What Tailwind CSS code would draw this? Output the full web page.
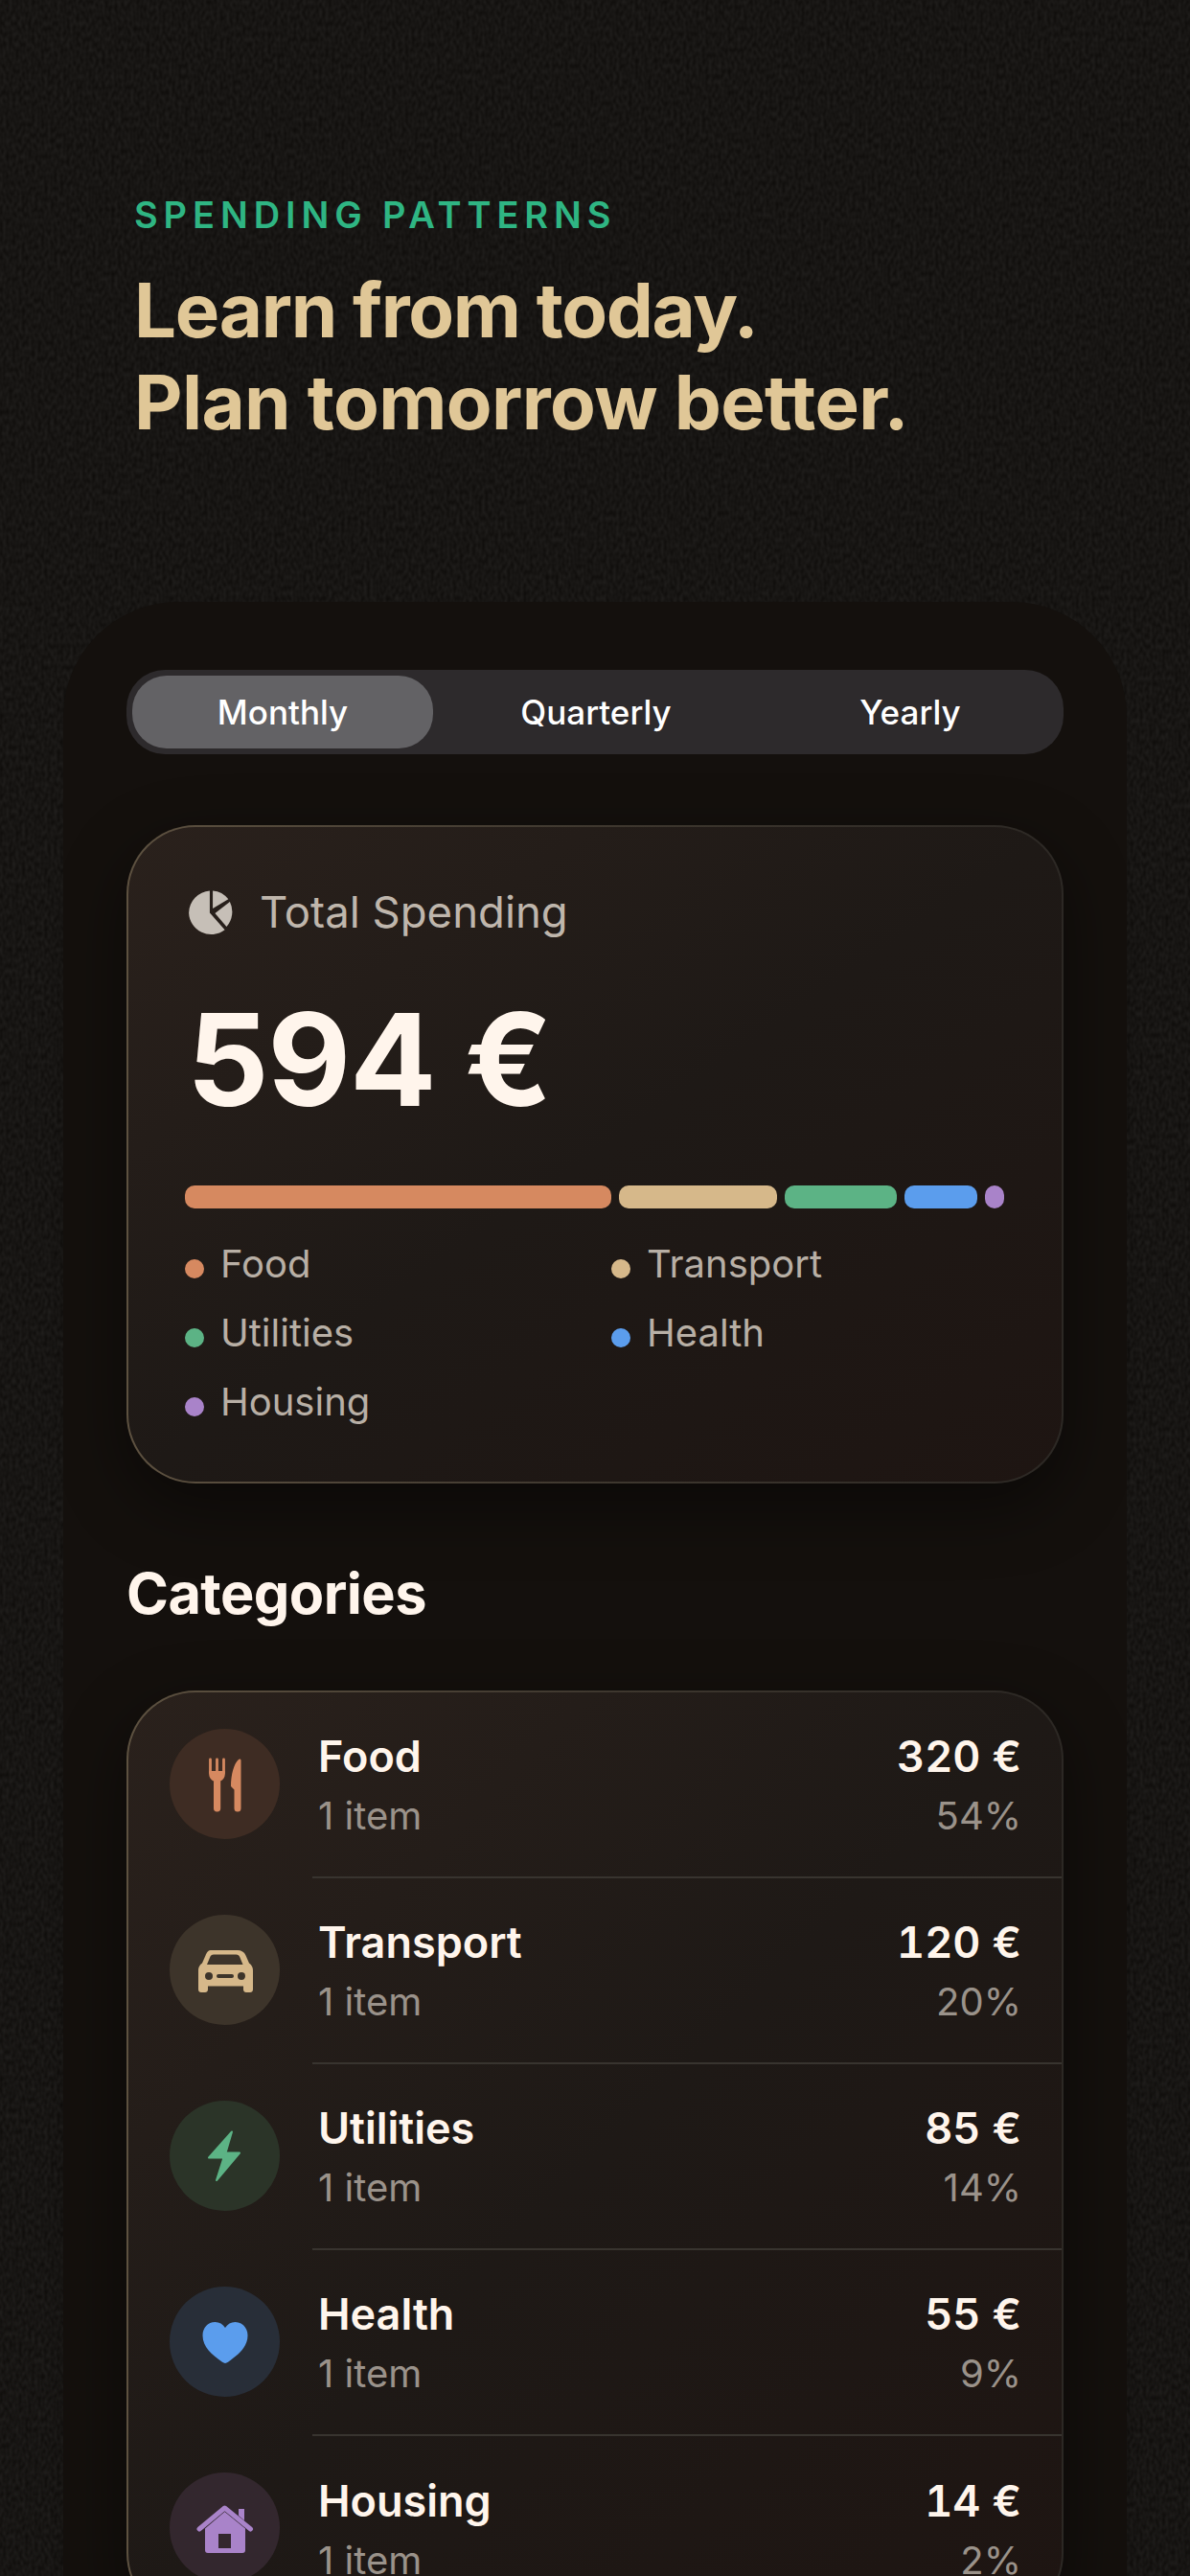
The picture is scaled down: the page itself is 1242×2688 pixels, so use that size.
<!DOCTYPE html>
<html lang="en">
<head>
  <meta charset="UTF-8">
  <meta name="viewport" content="width=device-width, initial-scale=1.0">
  <title>Spending Patterns</title>
  <script src="https://cdn.jsdelivr.net/npm/@tailwindcss/browser@4"></script>
</head>
<body class="bg-[#100e0c] font-[Inter,sans-serif]">
<div class="relative w-[1242px] h-[2688px] overflow-hidden bg-[#100e0c]">

  <!-- grain -->
  <svg class="absolute inset-0 w-full h-full" aria-hidden="true">
    <filter id="grain"><feTurbulence type="fractalNoise" baseFrequency="0.3 0.18" numOctaves="1" seed="4"/><feColorMatrix values="0 0 0 0 1  0 0 0 0 1  0 0 0 0 1  0.1 0 0 0 -0.02"/></filter>
    <rect width="100%" height="100%" filter="url(#grain)"/>
  </svg>

  <div class="relative">
    <header class="pt-[201px] pl-[140px] h-[628px]">
      <p class="text-[38px] leading-[46px] font-semibold tracking-[0.155em] text-[#2fb583]">SPENDING PATTERNS</p>
      <h1 class="mt-[29px] text-[78px] leading-[96px] font-bold tracking-[-0.008em] text-[#e0c797]"><span class="tracking-[-0.017em]">Learn from today.</span><br>Plan tomorrow better.</h1>
    </header>

    <main class="mx-[66px] px-[66px] pt-[71px] bg-[#14100d] rounded-t-[120px] h-[2060px]">

      <div class="flex w-[978px] h-[88px] p-[6px] rounded-[40px] bg-[#2d2a2c] text-[35px] font-medium text-white">
        <div class="w-[314px] rounded-[36px] bg-[#636265] flex items-center justify-center">Monthly</div>
        <div class="w-[336px] pl-[4px] flex items-center justify-center">Quarterly</div>
        <div class="w-[316px] pl-[8px] flex items-center justify-center">Yearly</div>
      </div>

      <!-- total -->
      <section class="mt-[74px] w-[978px] h-[687px] p-[2px] rounded-[72px] bg-linear-to-r from-[#5d5140] via-[#3f382f] to-[#2c2824] shadow-[0_24px_70px_rgba(0,0,0,0.45)]">
        <div class="h-full rounded-[70px] bg-linear-to-br from-[#2a211c] via-[#1e1916] to-[#1e1512] pl-[59px] pr-[59px] pt-[65px]">
          <div class="flex items-center h-[48px] pl-[4px] gap-[27px]">
            <svg class="w-[47px] h-[47px]" viewBox="0 0 48 48" fill="#c6bfb7">
              <path d="M22.4 .6V24l16 18.2A23.9 23.9 0 0 1 .1 24 23.9 23.9 0 0 1 22.4 .6z"/>
              <path d="M25.6 .6a23.9 23.9 0 0 1 16.6 8.9L25.6 19.4z"/>
              <path d="M43.8 12.2a23.9 23.9 0 0 1-3.5 26.5L28 24.4z"/>
            </svg>
            <span class="text-[45.5px] leading-[48px] text-[#bfb6ac]">Total Spending</span>
          </div>
          <div class="mt-[49px] pl-[2px] text-[134px] leading-[160px] font-bold tracking-[-0.01em] text-[#fff5ec]">594 €</div>
          <div class="mt-[52px] flex gap-[8px] h-[24px]">
            <div class="w-[445px] rounded-[10px] bg-[#d68960]"></div>
            <div class="w-[165px] rounded-[10px] bg-[#d6b88a]"></div>
            <div class="w-[117px] rounded-[10px] bg-[#5cb385]"></div>
            <div class="w-[76px] rounded-[10px] bg-[#5b9ded]"></div>
            <div class="w-[20px] rounded-[10px] bg-[#a983c9]"></div>
          </div>
          <div class="mt-[22px] grid grid-cols-[445px_1fr] text-[40px] leading-[72px] text-[#b8afa5]">
            <div class="flex items-center gap-[17px]"><span class="mt-[10px] w-[20px] h-[20px] rounded-full bg-[#d68960]"></span>Food</div>
            <div class="flex items-center gap-[17px]"><span class="mt-[10px] w-[20px] h-[20px] rounded-full bg-[#d6b88a]"></span>Transport</div>
            <div class="flex items-center gap-[17px]"><span class="mt-[10px] w-[20px] h-[20px] rounded-full bg-[#5cb385]"></span>Utilities</div>
            <div class="flex items-center gap-[17px]"><span class="mt-[10px] w-[20px] h-[20px] rounded-full bg-[#5b9ded]"></span>Health</div>
            <div class="flex items-center gap-[17px]"><span class="mt-[10px] w-[20px] h-[20px] rounded-full bg-[#a983c9]"></span>Housing</div>
          </div>
        </div>
      </section>

      <h2 class="mt-[79px] text-[59.5px] leading-[70px] font-bold tracking-[-0.01em] text-[#fff5ec]">Categories</h2>

      <!-- categories -->
      <section class="mt-[67px] w-[978px] h-[972px] p-[2px] rounded-[72px] bg-linear-to-r from-[#5d5140] via-[#3f382f] to-[#2c2824] shadow-[0_24px_70px_rgba(0,0,0,0.45)]">
        <div class="h-full rounded-[70px] bg-linear-to-br from-[#2a211c] via-[#1e1916] to-[#1e1512]">

          <div class="flex items-center h-[194px] pl-[43px]">
            <div class="mb-[4px] w-[115px] h-[115px] shrink-0 rounded-full bg-[#3e2c23]">
              <svg viewBox="0 0 115 115" fill="#d68960">
                <path d="M41.2 44h16.6v3.5c0 3.2-2 6-5 7.2H46.2c-3-1.2-5-4-5-7.2z"/>
                <path d="M42.5 32v14M49.5 32v14M56.5 32v14" stroke="#d68960" stroke-width="2.8" stroke-linecap="round"/>
                <rect x="46" y="52" width="7.2" height="34.5" rx="3.4"/>
                <path d="M74.5 33v50a3.5 3.5 0 0 1-7 0V63.500l-3.500-3.500c0-12 3-23.500 8-28 1.300-1 2.500-.5 2.500 1z"/>
              </svg>
            </div>
            <div class="ml-[34px] flex-1 h-full border-b-2 border-[#38342f] flex items-center justify-between pl-[6px] pr-[42px]">
              <div class="pt-[2px]"><div class="text-[45px] leading-[60px] font-semibold text-[#fff5ec]">Food</div><div class="pt-[3px] text-[40px] leading-[58px] text-[#9a928a]">1 item</div></div>
              <div class="pt-[2px] text-right"><div class="text-[45px] leading-[60px] font-semibold tabular-nums text-[#fff5ec]">320 €</div><div class="pt-[3px] text-[40px] leading-[58px] text-[#9a928a]">54%</div></div>
            </div>
          </div>

          <div class="flex items-center h-[194px] pl-[43px]">
            <div class="mb-[4px] w-[115px] h-[115px] shrink-0 rounded-full bg-[#3d342a]">
              <svg viewBox="0 0 115 115" fill="#d6b88a">
                <path fill-rule="evenodd" d="M44 37h27c4 0 7 2 8.500 5.500l3.500 8c2.800 2 4 4.500 4 7.500v20c0 1.700-1.300 3-3 3h-4c-1.700 0-3-1.300-3-3v-3.500H40V78c0 1.700-1.300 3-3 3h-4c-1.700 0-3-1.300-3-3V58c0-3 1.200-5.500 4-7.500l3.500-8C39 39 40 37 44 37zM46 41.500c-2 0-3 1-3.800 2.800L39 52h37.500l-3.200-7.700c-.8-1.800-1.800-2.800-3.800-2.800zM41 60a4 4 0 1 0 0 8 4 4 0 0 0 0-8zM75 60a4 4 0 1 0 0 8 4 4 0 0 0 0-8zM51 62a2 2 0 0 0 0 4h14a2 2 0 0 0 0-4z"/>
              </svg>
            </div>
            <div class="ml-[34px] flex-1 h-full border-b-2 border-[#38342f] flex items-center justify-between pl-[6px] pr-[42px]">
              <div class="pt-[2px]"><div class="text-[45px] leading-[60px] font-semibold text-[#fff5ec]">Transport</div><div class="pt-[3px] text-[40px] leading-[58px] text-[#9a928a]">1 item</div></div>
              <div class="pt-[2px] text-right"><div class="text-[45px] leading-[60px] font-semibold tabular-nums text-[#fff5ec]">120 €</div><div class="pt-[3px] text-[40px] leading-[58px] text-[#9a928a]">20%</div></div>
            </div>
          </div>

          <div class="flex items-center h-[194px] pl-[43px]">
            <div class="mb-[4px] w-[115px] h-[115px] shrink-0 rounded-full bg-[#2b3428]">
              <svg viewBox="0 0 115 115" fill="#5cb385" stroke="#5cb385" stroke-width="2" stroke-linejoin="round">
                <path d="M65 32.500 41 59.500h15.500L49 83l24-28.500H58.500z"/>
              </svg>
            </div>
            <div class="ml-[34px] flex-1 h-full border-b-2 border-[#38342f] flex items-center justify-between pl-[6px] pr-[42px]">
              <div class="pt-[2px]"><div class="text-[45px] leading-[60px] font-semibold text-[#fff5ec]">Utilities</div><div class="pt-[3px] text-[40px] leading-[58px] text-[#9a928a]">1 item</div></div>
              <div class="pt-[2px] text-right"><div class="text-[45px] leading-[60px] font-semibold tabular-nums text-[#fff5ec]">85 €</div><div class="pt-[3px] text-[40px] leading-[58px] text-[#9a928a]">14%</div></div>
            </div>
          </div>

          <div class="flex items-center h-[194px] pl-[43px]">
            <div class="mb-[4px] w-[115px] h-[115px] shrink-0 rounded-full bg-[#282e38]">
              <svg viewBox="0 0 115 115" fill="#5b9ded">
                <path d="M58 80c-1 0-2-.5-3-1.200C44 71 34.500 63 34.500 51c0-8 5.500-14 13-14 4.500 0 8 2.300 10.500 6 2.500-3.700 6-6 10.500-6 7.500 0 13 6 13 14 0 12-9.500 20-20.500 27.800-1 .7-2 1.200-3 1.200z"/>
              </svg>
            </div>
            <div class="ml-[34px] flex-1 h-full border-b-2 border-[#38342f] flex items-center justify-between pl-[6px] pr-[42px]">
              <div class="pt-[2px]"><div class="text-[45px] leading-[60px] font-semibold text-[#fff5ec]">Health</div><div class="pt-[3px] text-[40px] leading-[58px] text-[#9a928a]">1 item</div></div>
              <div class="pt-[2px] text-right"><div class="text-[45px] leading-[60px] font-semibold tabular-nums text-[#fff5ec]">55 €</div><div class="pt-[3px] text-[40px] leading-[58px] text-[#9a928a]">9%</div></div>
            </div>
          </div>

          <div class="flex items-center h-[194px] pl-[43px]">
            <div class="mb-[4px] w-[115px] h-[115px] shrink-0 rounded-full bg-[#33272e]">
              <svg viewBox="0 0 115 115" fill="#a983c9">
                <path fill-rule="evenodd" d="M57.500 41 79 58.500V81c0 2-1 3-3 3H40c-2 0-3-1-3-3V58.500zM51 64v15h13V64z"/>
                <path d="M72 38h6v12l-6-5z"/>
                <path d="M31 59 57.500 37 84.500 59" fill="none" stroke="#a983c9" stroke-width="5" stroke-linecap="round" stroke-linejoin="round"/>
              </svg>
            </div>
            <div class="ml-[34px] flex-1 h-full flex items-center justify-between pl-[6px] pr-[42px]">
              <div class="pt-[2px]"><div class="text-[45px] leading-[60px] font-semibold text-[#fff5ec]">Housing</div><div class="pt-[3px] text-[40px] leading-[58px] text-[#9a928a]">1 item</div></div>
              <div class="pt-[2px] text-right"><div class="text-[45px] leading-[60px] font-semibold tabular-nums text-[#fff5ec]">14 €</div><div class="pt-[3px] text-[40px] leading-[58px] text-[#9a928a]">2%</div></div>
            </div>
          </div>

        </div>
      </section>
    </main>
  </div>
</div>
</body>
</html>
